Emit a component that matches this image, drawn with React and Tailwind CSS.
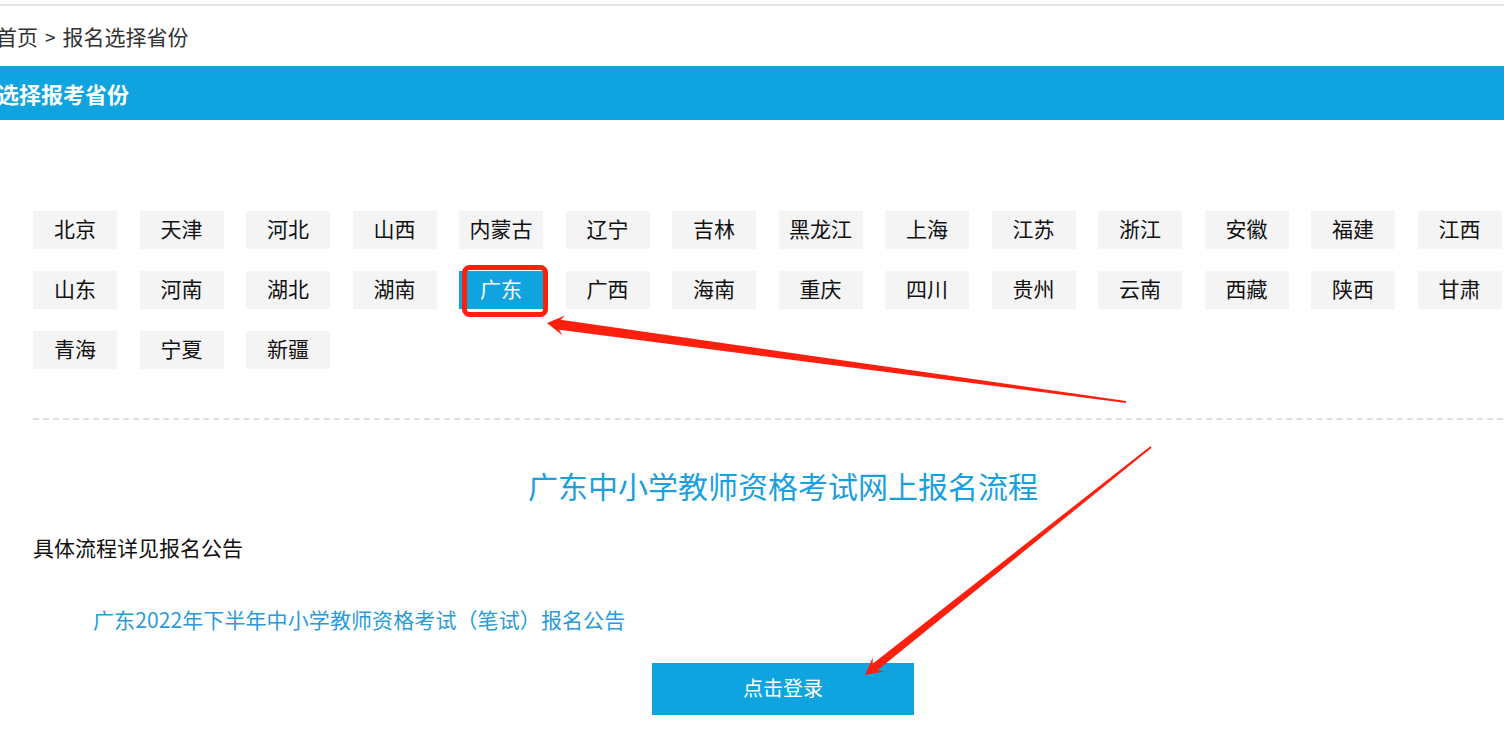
import { useState } from "react"

const rows = [
  ["北京", "天津", "河北", "山西", "内蒙古", "辽宁", "吉林", "黑龙江", "上海", "江苏", "浙江", "安徽", "福建", "江西"],
  ["山东", "河南", "湖北", "湖南", "广东", "广西", "海南", "重庆", "四川", "贵州", "云南", "西藏", "陕西", "甘肃"],
  ["青海", "宁夏", "新疆"],
]

const font = { fontFamily: '"Microsoft YaHei", "Noto Sans CJK SC", "Noto Sans", sans-serif' }

// red annotation marks drawn over the page
const Annotations = () => (
  <svg
    className="absolute left-0 top-0 pointer-events-none"
    width="1504"
    height="755"
    viewBox="0 0 1504 755"
  >
    <rect x="464.5" y="267.5" width="81" height="47" rx="5" fill="none" stroke="#ff1f0f" strokeWidth="5" />
    <polygon
      fill="#ff1f0f"
      points="547,323 565.2,315.4 560.6,319.8 1126.1,401 1125.9,403 559.2,329.8 562.4,335.2"
    />
    <polygon
      fill="#ff1f0f"
      points="865,675 883.9,671.4 877.7,670 1151.6,447.8 1150.4,446.2 872.7,663.8 872.7,657.4"
    />
  </svg>
)

export default function App() {
  const [active, setActive] = useState("广东")

  return (
    <div className="relative w-[1504px] h-[755px] overflow-hidden bg-white" style={font}>
      <div className="pt-[4px]">
        <div className="h-[2px] bg-[#e3e3e3]" />
      </div>

      <div className="h-[60px] flex items-center -ml-[4px] text-[21px] text-[#333] leading-none">
        <span>首页</span>
        <span className="mx-[7px] text-[19px]">&gt;</span>
        <span>报名选择省份</span>
      </div>

      <div className="h-[54px] bg-[#0fa4e0] flex items-center">
        <p className="-ml-[3px] text-[22px] font-bold text-white leading-none">选择报考省份</p>
      </div>

      <div className="ml-[33px] w-[1500px]">
        <div className="mt-[91px] grid grid-cols-[repeat(14,84px)] gap-x-[22.5px] gap-y-[22px]">
          {rows.flat().map((name) => (
            <button
              key={name}
              onClick={() => setActive(name)}
              className={
                "h-[38px] pb-[3px] flex items-center justify-center text-[21px] leading-none " +
                (active === name ? "bg-[#0fa4e0] text-white" : "bg-[#f4f4f4] text-[#111]")
              }
            >
              {name}
            </button>
          ))}
        </div>

        <div className="mt-[49px] border-t-2 border-dashed border-[#dedede]" />

        <h2 className="mt-[45px] h-[40px] flex items-center justify-center text-[30px] text-[#1ba0de] leading-none">
          广东中小学教师资格考试网上报名流程
        </h2>

        <p className="mt-[27px] h-[30px] flex items-center text-[21px] text-[#111] leading-none">
          具体流程详见报名公告
        </p>

        <a className="mt-[42px] ml-[60px] h-[30px] flex items-center text-[21px] tracking-[0.1px] text-[#2a9bd8] leading-none cursor-pointer">
          广东2022年下半年中小学教师资格考试（笔试）报名公告
        </a>

        <div className="mt-[29px] flex justify-center">
          <button className="w-[262px] h-[52px] pb-[2px] bg-[#0fa4e0] text-white text-[20px] leading-none">
            点击登录
          </button>
        </div>
      </div>

      <Annotations />
    </div>
  )
}
